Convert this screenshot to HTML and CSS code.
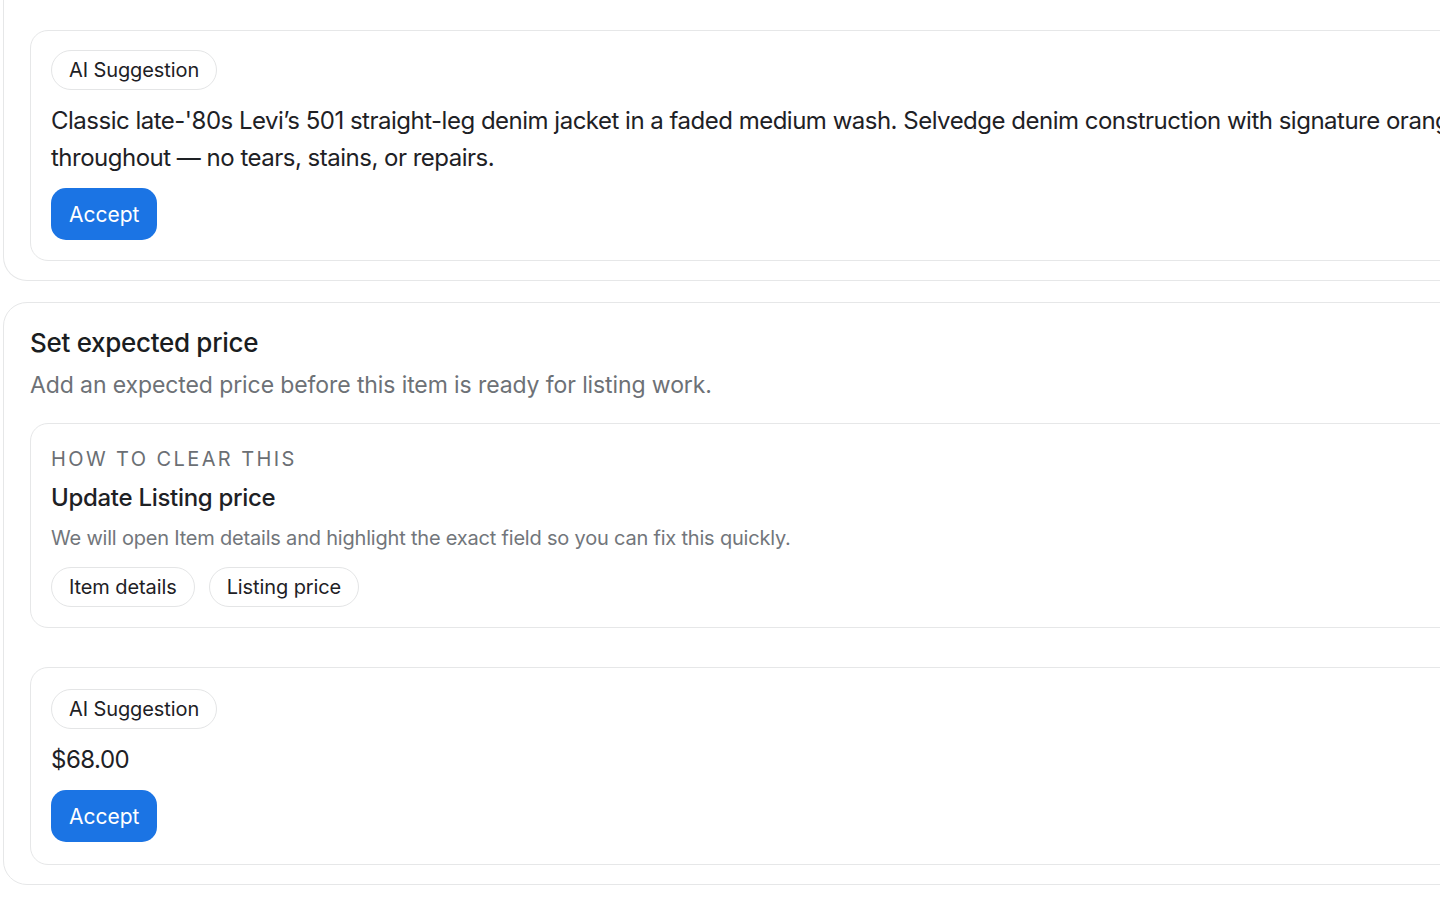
FILE: index.html
```html
<!DOCTYPE html>
<html lang="en">
<head>
<meta charset="utf-8">
<title>Review item</title>
<link rel="stylesheet" href="styles.css">
</head>
<body>
<main class="stack">
  <section class="panel panel--continued">
    <div class="box">
      <span class="chip">AI Suggestion</span>
      <p class="suggestion-text">Classic late-'80s Levi’s 501 straight-leg denim jacket in a faded medium wash. Selvedge denim construction with signature orange tab and even fading<br>throughout — no tears, stains, or repairs.</p>
      <div><button class="btn-primary" type="button">Accept</button></div>
    </div>
  </section>

  <section class="panel">
    <h2 class="panel-title">Set expected price</h2>
    <p class="panel-sub">Add an expected price before this item is ready for listing work.</p>
    <div class="box box--howto">
      <div class="eyebrow">HOW TO CLEAR THIS</div>
      <h3 class="howto-title">Update Listing price</h3>
      <p class="howto-text">We will open Item details and highlight the exact field so you can fix this quickly.</p>
      <div class="chip-row">
        <span class="chip">Item details</span>
        <span class="chip">Listing price</span>
      </div>
    </div>
    <div class="box box--spaced">
      <span class="chip">AI Suggestion</span>
      <p class="suggestion-text">$68.00</p>
      <div><button class="btn-primary" type="button">Accept</button></div>
    </div>
  </section>
</main>
</body>
</html>
```

FILE: styles.css
```css
* { box-sizing: border-box; }

html, body {
  margin: 0;
  padding: 0;
  background: #ffffff;
  overflow: hidden;
}

body {
  font-family: Inter, "Noto Sans", "Liberation Sans", sans-serif;
  color: #1e2125;
  padding-left: 3px;
}

.stack {
  width: 2100px;
  display: flex;
  flex-direction: column;
  gap: 21px;
}

.panel {
  border: 1.5px solid #e6e7e8;
  border-radius: 24px;
  background: #ffffff;
  padding: 23px 0 19px 26px;
  display: flex;
  flex-direction: column;
}

.panel--continued {
  border-top: none;
  border-top-left-radius: 0;
  border-top-right-radius: 0;
  padding-top: 30px;
}

.box {
  border: 1.5px solid #e6e7e8;
  border-radius: 18px;
  background: #ffffff;
  padding: 19px 20px 20px 20px;
  display: flex;
  flex-direction: column;
  align-items: flex-start;
  gap: 12px;
}

.box--howto {
  margin-top: 22px;
  gap: 0;
  padding-top: 23px;
  padding-bottom: 20px;
}

.box--spaced {
  margin-top: 39px;
  padding-top: 21px;
  padding-bottom: 22px;
}

.chip {
  display: inline-flex;
  align-items: center;
  height: 40px;
  padding: 0 17px;
  border: 1.5px solid #e4e5e6;
  border-radius: 999px;
  font-size: 20px;
  letter-spacing: -0.1px;
  color: #1e2125;
  background: #ffffff;
}

.suggestion-text {
  margin: 0;
  font-size: 24px;
  line-height: 37px;
  letter-spacing: -0.5px;
  color: #1e2125;
}

.btn-primary {
  font-family: inherit;
  font-size: 21px;
  color: #ffffff;
  background: #1b74e4;
  border: none;
  border-radius: 15px;
  height: 52px;
  padding: 0 18px;
  cursor: pointer;
}

.panel-title {
  margin: 0;
  font-size: 26px;
  font-weight: 450;
  line-height: 34px;
  letter-spacing: -0.3px;
  color: #1a1d21;
}

.panel-sub {
  margin: 9px 0 0;
  font-size: 23px;
  line-height: 32px;
  letter-spacing: -0.1px;
  color: #6d7176;
}

.eyebrow {
  font-size: 20px;
  font-weight: 400;
  line-height: 24px;
  letter-spacing: 2.4px;
  color: #6b6f74;
}

.howto-title {
  margin: 11px 0 0;
  font-size: 24px;
  font-weight: 450;
  line-height: 32px;
  letter-spacing: -0.3px;
  color: #1e2125;
}

.howto-text {
  margin: 11px 0 0;
  font-size: 20px;
  line-height: 26px;
  letter-spacing: -0.2px;
  color: #72767b;
}

.chip-row {
  margin-top: 16px;
  display: flex;
  gap: 14px;
}
```
